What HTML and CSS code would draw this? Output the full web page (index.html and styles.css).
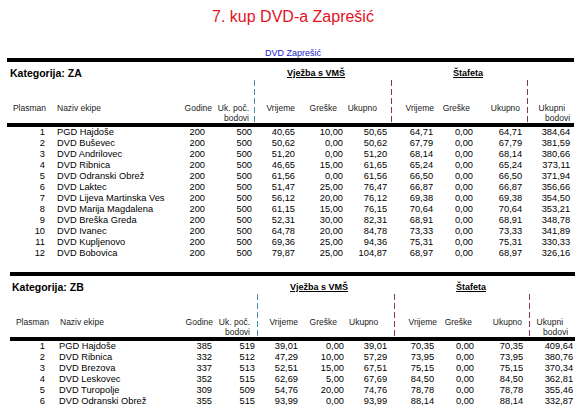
FILE: index.html
```html
<!DOCTYPE html>
<html>
<head>
<meta charset="utf-8">
<link rel="stylesheet" href="styles.css">
</head>
<body>
<div class="page">
  <h1 class="title">7. kup DVD-a Zaprešić</h1>
  <div class="club"><a href="#">DVD Zaprešić</a></div>

  <table class="results za">
    <colgroup>
      <col style="width:40px"><col style="width:123px"><col style="width:44px"><col style="width:41px">
      <col style="width:43px"><col style="width:48px"><col style="width:46px">
      <col style="width:44px"><col style="width:40px"><col style="width:52px"><col style="width:46px">
    </colgroup>
    <thead>
      <tr class="cat-row">
        <th colspan="4" class="cat">Kategorija: ZA</th>
        <th colspan="3" class="grp vms"><u>Vježba s VMŠ</u></th>
        <th colspan="3" class="grp staf"><u>Štafeta</u></th>
        <th></th>
      </tr>
      <tr class="head-row">
        <th>Plasman</th><th>Naziv ekipe</th><th>Godine</th><th class="cut teal">Uk. poč.<br>bodovi</th>
        <th>Vrijeme</th><th>Greške</th><th class="cut plum">Ukupno</th>
        <th>Vrijeme</th><th>Greške</th><th class="cut plum">Ukupno</th>
        <th><span class="ukupni">Ukupni</span><br>bodovi</th>
      </tr>
    </thead>
    <tbody>
      <tr><td>1</td><td>PGD Hajdoše</td><td>200</td><td>500</td><td>40,65</td><td>10,00</td><td>50,65</td><td>64,71</td><td>0,00</td><td>64,71</td><td>384,64</td></tr>
      <tr><td>2</td><td>DVD Buševec</td><td>200</td><td>500</td><td>50,62</td><td>0,00</td><td>50,62</td><td>67,79</td><td>0,00</td><td>67,79</td><td>381,59</td></tr>
      <tr><td>3</td><td>DVD Andrilovec</td><td>200</td><td>500</td><td>51,20</td><td>0,00</td><td>51,20</td><td>68,14</td><td>0,00</td><td>68,14</td><td>380,66</td></tr>
      <tr><td>4</td><td>DVD Ribnica</td><td>200</td><td>500</td><td>46,65</td><td>15,00</td><td>61,65</td><td>65,24</td><td>0,00</td><td>65,24</td><td>373,11</td></tr>
      <tr><td>5</td><td>DVD Odranski Obrež</td><td>200</td><td>500</td><td>61,56</td><td>0,00</td><td>61,56</td><td>66,50</td><td>0,00</td><td>66,50</td><td>371,94</td></tr>
      <tr><td>6</td><td>DVD Laktec</td><td>200</td><td>500</td><td>51,47</td><td>25,00</td><td>76,47</td><td>66,87</td><td>0,00</td><td>66,87</td><td>356,66</td></tr>
      <tr><td>7</td><td>DVD Lijeva Martinska Ves</td><td>200</td><td>500</td><td>56,12</td><td>20,00</td><td>76,12</td><td>69,38</td><td>0,00</td><td>69,38</td><td>354,50</td></tr>
      <tr><td>8</td><td>DVD Marija Magdalena</td><td>200</td><td>500</td><td>61,15</td><td>15,00</td><td>76,15</td><td>70,64</td><td>0,00</td><td>70,64</td><td>353,21</td></tr>
      <tr><td>9</td><td>DVD Breška Greda</td><td>200</td><td>500</td><td>52,31</td><td>30,00</td><td>82,31</td><td>68,91</td><td>0,00</td><td>68,91</td><td>348,78</td></tr>
      <tr><td>10</td><td>DVD Ivanec</td><td>200</td><td>500</td><td>64,78</td><td>20,00</td><td>84,78</td><td>73,33</td><td>0,00</td><td>73,33</td><td>341,89</td></tr>
      <tr><td>11</td><td>DVD Kupljenovo</td><td>200</td><td>500</td><td>69,36</td><td>25,00</td><td>94,36</td><td>75,31</td><td>0,00</td><td>75,31</td><td>330,33</td></tr>
      <tr><td>12</td><td>DVD Bobovica</td><td>200</td><td>500</td><td>79,87</td><td>25,00</td><td>104,87</td><td>68,97</td><td>0,00</td><td>68,97</td><td>326,16</td></tr>
    </tbody>
  </table>

  <table class="results zb">
    <colgroup>
      <col style="width:40px"><col style="width:123px"><col style="width:44px"><col style="width:41px">
      <col style="width:43px"><col style="width:48px"><col style="width:46px">
      <col style="width:44px"><col style="width:40px"><col style="width:51px"><col style="width:45px">
    </colgroup>
    <thead>
      <tr class="cat-row">
        <th colspan="4" class="cat">Kategorija: ZB</th>
        <th colspan="3" class="grp vms"><u>Vježba s VMŠ</u></th>
        <th colspan="3" class="grp staf"><u>Štafeta</u></th>
        <th></th>
      </tr>
      <tr class="head-row">
        <th>Plasman</th><th>Naziv ekipe</th><th>Godine</th><th class="cut teal">Uk. poč.<br>bodovi</th>
        <th>Vrijeme</th><th>Greške</th><th class="cut plum">Ukupno</th>
        <th>Vrijeme</th><th>Greške</th><th class="cut plum">Ukupno</th>
        <th><span class="ukupni">Ukupni</span><br>bodovi</th>
      </tr>
    </thead>
    <tbody>
      <tr><td>1</td><td>PGD Hajdoše</td><td>385</td><td>519</td><td>39,01</td><td>0,00</td><td>39,01</td><td>70,35</td><td>0,00</td><td>70,35</td><td>409,64</td></tr>
      <tr><td>2</td><td>DVD Ribnica</td><td>332</td><td>512</td><td>47,29</td><td>10,00</td><td>57,29</td><td>73,95</td><td>0,00</td><td>73,95</td><td>380,76</td></tr>
      <tr><td>3</td><td>DVD Brezova</td><td>337</td><td>513</td><td>52,51</td><td>15,00</td><td>67,51</td><td>75,15</td><td>0,00</td><td>75,15</td><td>370,34</td></tr>
      <tr><td>4</td><td>DVD Leskovec</td><td>352</td><td>515</td><td>62,69</td><td>5,00</td><td>67,69</td><td>84,50</td><td>0,00</td><td>84,50</td><td>362,81</td></tr>
      <tr><td>5</td><td>DVD Turopolje</td><td>309</td><td>509</td><td>54,76</td><td>20,00</td><td>74,76</td><td>78,78</td><td>0,00</td><td>78,78</td><td>355,46</td></tr>
      <tr><td>6</td><td>DVD Odranski Obrež</td><td>355</td><td>515</td><td>93,99</td><td>0,00</td><td>93,99</td><td>88,14</td><td>0,00</td><td>88,14</td><td>332,87</td></tr>
    </tbody>
  </table>
</div>
</body>
</html>
```

FILE: styles.css
```css
body {
  margin: 0;
  background: #fff;
  font-family: "Liberation Sans", Arial, sans-serif;
  color: #000;
}

.title {
  margin: 8px 0 0;
  font-size: 16px;
  line-height: 18px;
  font-weight: normal;
  text-align: center;
  color: #e3121f;
}

.club {
  margin-top: 22px;
  font-size: 9px;
  line-height: 10px;
  text-align: center;
}
.club a {
  color: #1a1ac8;
  text-decoration: none;
}

/* both result tables share the same skeleton,
   only a few offsets differ per category */
.results {
  table-layout: fixed;
  border-collapse: separate;
  border-spacing: 0;
  border-top: 4px solid #000;
  margin: 0 0 13px 7px;
  width: 567px;
}
.results.zb {
  margin-left: 10px;
  width: 565px;
}

.results th,
.results td {
  padding: 0;
  white-space: nowrap;
  overflow: hidden;
}

.cat-row th {
  vertical-align: top;
  text-align: left;
  padding: 5px 0 1px;
  line-height: 12px;
  font-weight: bold;
}
.cat-row .cat {
  font-size: 10.5px;
  padding-left: 3px;
}
.zb .cat-row .cat {
  padding-left: 2px;
}
.cat-row .grp {
  font-size: 9px;
}
.cat-row .vms {
  padding-left: 32px;
}
.cat-row .staf {
  padding-left: 61px;
}

.head-row th {
  height: 20px;
  padding: 23px 3px 0 0;
  vertical-align: top;
  text-align: right;
  font-size: 8.5px;
  line-height: 10px;
  font-weight: normal;
  color: #1a1a1a;
  border-bottom: 4px solid #000;
}
.head-row th:nth-child(1) { padding-right: 1px; }
.head-row th:nth-child(2) { text-align: left; padding-left: 10px; }
.head-row th:nth-child(3) { padding-right: 2px; }
.head-row th:nth-child(4) { padding-right: 6px; }
.head-row th:nth-child(6) { padding-right: 9px; }
.head-row th:nth-child(7) { padding-right: 15px; }
.head-row th:nth-child(8) { padding-right: 2px; }
.head-row th:nth-child(9) { padding-right: 6px; }
.head-row th:nth-child(10) { padding-right: 8px; }
.head-row th:nth-child(11) { padding-right: 4px; }
.zb .head-row th:nth-child(3) { padding-right: 4px; }
.zb .head-row th:nth-child(4) { padding-right: 8px; }
.zb .head-row th:nth-child(6) { padding-right: 12px; }
.zb .head-row th:nth-child(7) { padding-right: 18px; }
.zb .head-row th:nth-child(9) { padding-right: 7px; }
.zb .head-row th:nth-child(11) { padding-right: 7px; }

.ukupni {
  margin-right: 5px;
}

/* dashed separators only run through the header */
.head-row .cut {
  background-position: right top;
  background-size: 1px 9px;
  background-repeat: repeat-y;
}
.head-row .teal {
  background-image: linear-gradient(to bottom, #4b8fb0 0 6px, transparent 6px);
}
.head-row .plum {
  background-image: linear-gradient(to bottom, #8c3556 0 6px, transparent 6px);
}

.results td {
  font-size: 9.3px;
  line-height: 11px;
  text-align: right;
  padding-right: 3px;
}
.results td:nth-child(1) { padding-right: 2px; }
.results td:nth-child(2) { text-align: left; padding-left: 10px; }
.results td:nth-child(3) { padding-right: 9px; }
.results td:nth-child(7) { padding-right: 5px; }
.results td:nth-child(10) { padding-right: 6px; }
.results td:nth-child(11) { padding-right: 4px; }
.zb td:nth-child(1) { padding-right: 5px; }
.zb td:nth-child(2) { padding-left: 9px; }
.zb td:nth-child(3),
.zb td:nth-child(6),
.zb td:nth-child(8),
.zb td:nth-child(9) { padding-right: 5px; }
.zb td:nth-child(7) { padding-right: 8px; }
.zb td:nth-child(10) { padding-right: 7px; }
.zb td:nth-child(11) { padding-right: 2px; }
```
